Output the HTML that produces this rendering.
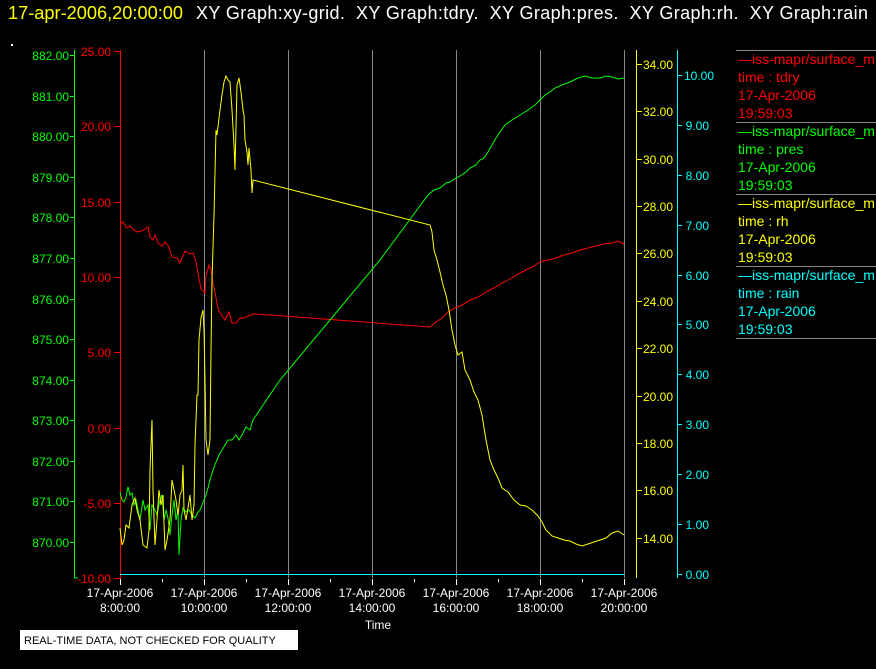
<!DOCTYPE html>
<html><head><meta charset="utf-8"><style>
html,body{margin:0;padding:0;background:#000;width:876px;height:669px;overflow:hidden}
svg{display:block;font-family:"Liberation Sans",sans-serif}
</style></head><body>
<svg width="876" height="669" viewBox="0 0 876 669" xmlns="http://www.w3.org/2000/svg">
<rect width="876" height="669" fill="#000"/>
<text x="8" y="19" font-size="18" fill="#ffff00" textLength="175" lengthAdjust="spacingAndGlyphs">17-apr-2006,20:00:00</text>
<text x="196" y="19" font-size="18" fill="#fff" style="white-space:pre" xml:space="preserve" textLength="672" lengthAdjust="spacing">XY Graph:xy-grid.  XY Graph:tdry.  XY Graph:pres.  XY Graph:rh.  XY Graph:rain</text>
<rect x="11" y="44" width="2" height="2" fill="#fff"/>
<g stroke="#888" stroke-width="1">
<line x1="204.5" y1="50" x2="204.5" y2="578"/><line x1="288.5" y1="50" x2="288.5" y2="578"/>
<line x1="372.5" y1="50" x2="372.5" y2="578"/><line x1="456.5" y1="50" x2="456.5" y2="578"/>
<line x1="540.5" y1="50" x2="540.5" y2="578"/><line x1="624.5" y1="50" x2="624.5" y2="578"/>
</g>
<g stroke="#00ff00" fill="none"><line x1="74.5" y1="50" x2="74.5" y2="578"/>
<path d="M70 55.5h5M70 96.5h5M70 136.5h5M70 177.5h5M70 217.5h5M70 258.5h5M70 299.5h5M70 339.5h5M70 380.5h5M70 420.5h5M70 461.5h5M70 501.5h5M70 542.5h5M74 578h4"/></g>
<g fill="#00ff00" font-size="12" text-anchor="end">
<text x="69" y="60">882.00</text><text x="69" y="101">881.00</text><text x="69" y="141">880.00</text><text x="69" y="182">879.00</text><text x="69" y="222">878.00</text><text x="69" y="263">877.00</text><text x="69" y="304">876.00</text><text x="69" y="344">875.00</text><text x="69" y="385">874.00</text><text x="69" y="425">873.00</text><text x="69" y="466">872.00</text><text x="69" y="506">871.00</text><text x="69" y="547">870.00</text></g>
<g stroke="#ff0000" fill="none"><line x1="120.5" y1="50" x2="120.5" y2="579"/>
<path d="M114 51.5h6M114 126.5h6M114 202.5h6M114 277.5h6M114 352.5h6M114 428.5h6M114 503.5h6M114 578.5h6"/></g>
<g fill="#ff0000" font-size="12" text-anchor="end">
<text x="111" y="56">25.00</text><text x="111" y="131">20.00</text><text x="111" y="207">15.00</text><text x="111" y="282">10.00</text><text x="111" y="357">5.00</text><text x="111" y="433">0.00</text><text x="111" y="508">-5.00</text><text x="111" y="583">-10.00</text></g>
<g stroke="#fff"><path d="M120.5 579v6M162.5 579v3M204.5 579v6M246.5 579v3M288.5 579v6M330.5 579v3M372.5 579v6M414.5 579v3M456.5 579v6M498.5 579v3M540.5 579v6M582.5 579v3M624.5 579v6"/></g>
<g fill="#fff" font-size="12" text-anchor="middle">
<text x="120" y="597">17-Apr-2006</text><text x="120" y="612">8:00:00</text>
<text x="204" y="597">17-Apr-2006</text><text x="204" y="612">10:00:00</text>
<text x="288" y="597">17-Apr-2006</text><text x="288" y="612">12:00:00</text>
<text x="372" y="597">17-Apr-2006</text><text x="372" y="612">14:00:00</text>
<text x="456" y="597">17-Apr-2006</text><text x="456" y="612">16:00:00</text>
<text x="540" y="597">17-Apr-2006</text><text x="540" y="612">18:00:00</text>
<text x="624" y="597">17-Apr-2006</text><text x="624" y="612">20:00:00</text>
<text x="378" y="629">Time</text></g>
<g stroke="#ffff00" fill="none"><line x1="636.5" y1="50" x2="636.5" y2="578"/>
<path d="M637 64.5h5M637 111.5h5M637 159.5h5M637 206.5h5M637 253.5h5M637 301.5h5M637 348.5h5M637 396.5h5M637 443.5h5M637 490.5h5M637 538.5h5"/></g>
<g fill="#ffff00" font-size="12">
<text x="643" y="69">34.00</text><text x="643" y="116">32.00</text><text x="643" y="164">30.00</text><text x="643" y="211">28.00</text><text x="643" y="258">26.00</text><text x="643" y="306">24.00</text><text x="643" y="353">22.00</text><text x="643" y="401">20.00</text><text x="643" y="448">18.00</text><text x="643" y="495">16.00</text><text x="643" y="543">14.00</text></g>
<g stroke="#00ffff" fill="none"><line x1="677.5" y1="50" x2="677.5" y2="578"/>
<path d="M678 75.5h4M678 125.5h4M678 175.5h4M678 225.5h4M678 275.5h4M678 324.5h4M678 374.5h4M678 424.5h4M678 474.5h4M678 524.5h4M678 574.5h4"/></g>
<g fill="#00ffff" font-size="12" text-anchor="end">
<text x="714" y="80">10.00</text><text x="709" y="130">9.00</text><text x="709" y="180">8.00</text><text x="709" y="230">7.00</text><text x="709" y="280">6.00</text><text x="709" y="329">5.00</text><text x="709" y="379">4.00</text><text x="709" y="429">3.00</text><text x="709" y="479">2.00</text><text x="709" y="529">1.00</text><text x="709" y="579">0.00</text></g>
<line x1="120" y1="574.5" x2="624" y2="574.5" stroke="#00ffff"/>
<polyline fill="none" stroke="#ff0000" stroke-width="1" points="120,224 123,222 127,228 130,226 133,229 137,232 142,231 145,229 148,227 150,237 153,240 155,235 158,243 162,246 165,242 168,245 172,257 177,258 180,263 185,251 190,254 193,253 196,262 198,273 201,289 205,293 206,276 209,265 211,270 213,284 215,292 218,309 222,316 225,320 229,312 232,323 236,323 240,318 244,318 253,314 270,315 430,327 436,322 442,318 448,312 455,308 462,305 470,300 478,297 486,292 494,288 502,283 510,279 518,274 526,270 534,266 540,262 548,260 556,258 564,255 572,253 580,250 588,248 596,246 604,244 612,243 618,241 624,244"/>
<polyline fill="none" stroke="#00ff00" stroke-width="1" points="120,492 122,500 124,502 126,497 128,487 130,495 132,493 134,505 136,500 138,510 140,520 143,500 145,510 148,505 150,530 152,505 155,510 157,515 160,500 162,495 164,520 166,510 168,518 170,535 172,515 174,500 176,520 178,510 179,555 181,520 183,508 186,512 189,510 192,515 195,518 198,512 200,510 202,505 204,500 206,495 208,488 210,480 213,470 216,462 219,455 222,450 225,445 228,440 232,440 236,435 239,440 242,435 246,427 250,430 253,420 280,380 330,320 380,260 428,195 434,190 440,188 446,183 450,182 456,178 460,176 466,172 470,168 476,165 480,160 484,158 488,152 492,145 496,138 500,132 505,125 512,120 520,115 528,110 535,105 540,100 545,95 550,92 555,88 562,85 570,82 578,78 585,76 592,78 600,78 606,76 612,77 618,79 624,78"/>
<polyline fill="none" stroke="#ffff00" stroke-width="1" points="120,528 122,545 124,540 126,525 129,528 132,505 135,498 137,510 140,520 143,545 147,548 149,530 150,470 152,420 153,490 155,545 157,520 159,490 161,505 163,495 165,550 167,540 170,520 172,480 176,500 178,515 180,495 182,490 183,465 184,510 186,520 188,508 190,495 192,520 194,505 195,445 197,395 198,395 199,340 201,318 203,310 204,330 205,380 206,440 208,455 210,440 211,350 212,280 214,215 216,130 217,135 220,110 222,95 224,82 226,76 228,80 230,82 232,110 234,145 235,170 237,85 239,78 241,92 243,110 244,115 245,140 247,152 248,165 249,148 251,170 252,193 253,180 430,225 432,232 434,250 437,260 440,272 443,285 446,295 449,310 452,330 455,345 458,355 462,352 465,370 470,380 474,392 478,400 482,415 486,440 490,460 494,470 498,478 502,488 508,492 514,500 520,505 526,506 532,510 538,516 542,522 546,530 552,536 558,538 564,540 570,541 576,544 582,546 588,544 594,542 600,540 606,538 612,533 618,531 624,535"/>
<g stroke="#888"><line x1="736" y1="50.5" x2="876" y2="50.5"/><line x1="736" y1="122.5" x2="876" y2="122.5"/><line x1="736" y1="194.5" x2="876" y2="194.5"/><line x1="736" y1="266.5" x2="876" y2="266.5"/><line x1="736" y1="338.5" x2="876" y2="338.5"/></g>
<g font-size="14">
<g fill="#ff0000"><text x="738" y="64">—iss-mapr/surface_m</text><text x="738" y="82">time : tdry</text><text x="738" y="100">17-Apr-2006</text><text x="738" y="118">19:59:03</text></g>
<g fill="#00ff00"><text x="738" y="136">—iss-mapr/surface_m</text><text x="738" y="154">time : pres</text><text x="738" y="172">17-Apr-2006</text><text x="738" y="190">19:59:03</text></g>
<g fill="#ffff00"><text x="738" y="208">—iss-mapr/surface_m</text><text x="738" y="226">time : rh</text><text x="738" y="244">17-Apr-2006</text><text x="738" y="262">19:59:03</text></g>
<g fill="#00ffff"><text x="738" y="280">—iss-mapr/surface_m</text><text x="738" y="298">time : rain</text><text x="738" y="316">17-Apr-2006</text><text x="738" y="334">19:59:03</text></g>
</g>
<rect x="20" y="630" width="278" height="20" fill="#fff"/>
<text x="24" y="644" font-size="11" fill="#000">REAL-TIME DATA, NOT CHECKED FOR QUALITY</text>
</svg>
</body></html>
